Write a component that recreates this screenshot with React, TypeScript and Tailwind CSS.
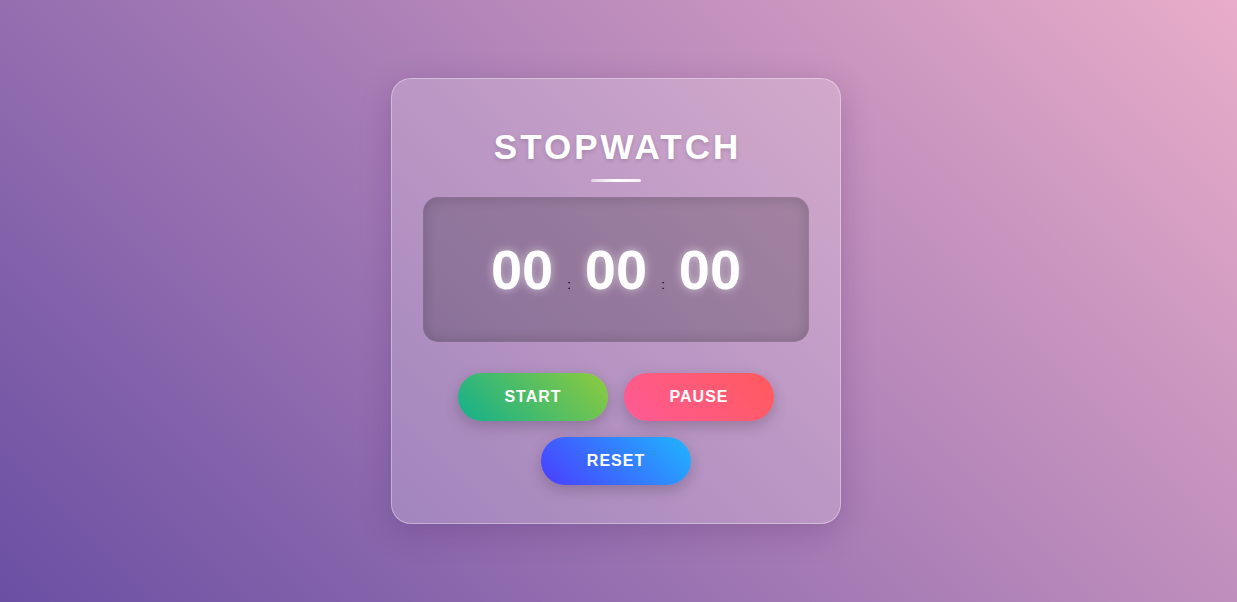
import React from "react";

export default function App() {
  const font = { fontFamily: '"Liberation Sans", Arial, sans-serif' };
  return (
    <div
      className="w-full h-[602px] flex items-center justify-center pr-[5px] bg-[linear-gradient(45deg,#6a4fa3,#e9adc9)]"
      style={font}
    >
      <div className="w-[450px] rounded-[20px] bg-white/20 border border-white/35 shadow-[0_8px_32px_rgba(60,20,80,0.22)] px-8 pt-[50px] pb-[38px] flex flex-col items-center">
        <h1 className="shrink-0 text-[35px] leading-none font-bold tracking-[3px] pl-[3px] text-white [text-shadow:0_2px_4px_rgba(0,0,0,0.15)]">
          STOPWATCH
        </h1>
        <div className="shrink-0 mt-[15px] w-[50px] h-[3px] rounded-full bg-[linear-gradient(90deg,rgba(255,255,255,0.55),#ffffff_50%,rgba(255,255,255,0.85))]" />
        <div className="shrink-0 mt-[15px] w-[386px] h-[145px] rounded-[15px] bg-black/20 border border-black/5 shadow-[inset_0_0_15px_rgba(0,0,0,0.18)] flex items-baseline justify-center pt-[44px]">
          <span className="text-[56px] leading-none font-bold text-white [text-shadow:0_0_10px_rgba(255,255,255,0.55)]">00</span>
          <span className="text-[13px] leading-none text-black mx-[14px]">:</span>
          <span className="text-[56px] leading-none font-bold text-white [text-shadow:0_0_10px_rgba(255,255,255,0.55)]">00</span>
          <span className="text-[13px] leading-none text-black mx-[14px]">:</span>
          <span className="text-[56px] leading-none font-bold text-white [text-shadow:0_0_10px_rgba(255,255,255,0.55)]">00</span>
        </div>
        <div className="shrink-0 mt-[31px] flex flex-wrap justify-center gap-4 w-[386px]">
          <button className="w-[150px] h-12 rounded-full text-white font-bold text-[16px] tracking-[1px] bg-[linear-gradient(45deg,#12b08d,#8fcb3d)] shadow-[0_5px_15px_rgba(0,0,0,0.2)]">
            START
          </button>
          <button className="w-[150px] h-12 rounded-full text-white font-bold text-[16px] tracking-[1px] bg-[linear-gradient(45deg,#ff5a96,#ff5a5c)] shadow-[0_5px_15px_rgba(0,0,0,0.2)]">
            PAUSE
          </button>
          <button className="w-[150px] h-12 rounded-full text-white font-bold text-[16px] tracking-[1px] bg-[linear-gradient(45deg,#4b3cff,#1fb6ff)] shadow-[0_5px_15px_rgba(0,0,0,0.2)]">
            RESET
          </button>
        </div>
      </div>
    </div>
  );
}
